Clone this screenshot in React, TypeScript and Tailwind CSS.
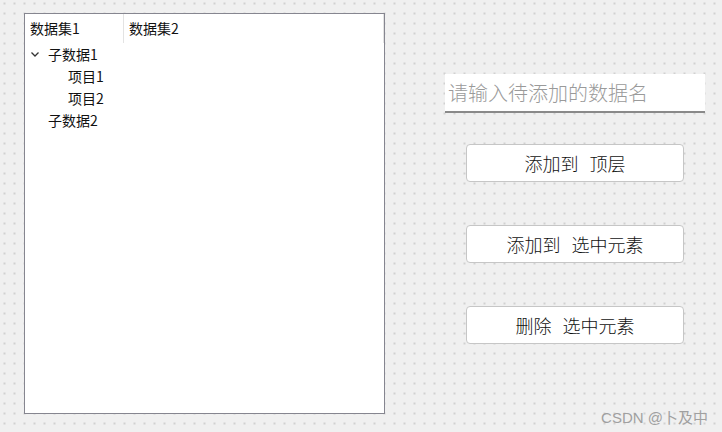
import React from "react";

const SANS = "font-['Noto_Sans_CJK_SC','Noto_Sans',sans-serif]";

interface TreeRow {
  label: string;
  depth: number;
  expanded?: boolean;
}

const ROWS: TreeRow[] = [
  { label: "子数据1", depth: 0, expanded: true },
  { label: "项目1", depth: 1 },
  { label: "项目2", depth: 1 },
  { label: "子数据2", depth: 0 },
];

function Chevron() {
  return (
    <svg width="10" height="10" viewBox="0 0 10 10" className="shrink-0">
      <path d="M1.5 3.5 L5 7 L8.5 3.5" fill="none" stroke="#333" strokeWidth="1.3" />
    </svg>
  );
}

function TreePanel() {
  return (
    <div className={`w-[361px] h-[401px] bg-white border border-[#868690] flex flex-col text-[14px] text-[#111] ${SANS}`}>
      {/* header */}
      <div className="h-[29px] flex items-stretch shrink-0">
        <div className="w-[99px] pl-[5px] flex items-center border-r border-[#e3e3e3]">数据集1</div>
        <div className="flex-1 pl-[5px] flex items-center border-r border-[#e3e3e3]">数据集2</div>
      </div>
      {/* rows */}
      <div className="flex flex-col">
        {ROWS.map((r) => (
          <div key={r.label} className="h-[22px] flex items-center pl-[5px]">
            <div className="w-[18px] flex items-center">{r.expanded ? <Chevron /> : null}</div>
            <div style={{ paddingLeft: r.depth * 20 }}>{r.label}</div>
          </div>
        ))}
      </div>
    </div>
  );
}

function Button({ verb, obj, mt }: { verb: string; obj: string; mt: string }) {
  return (
    <button
      type="button"
      className={`${mt} ml-[21px] w-[218px] h-[38px] bg-white border border-[#c6c6c6] rounded-[4px] text-[18px] font-light text-[#111] flex items-center justify-center gap-[11px]`}
    >
      <span>{verb}</span>
      <span>{obj}</span>
    </button>
  );
}

export default function App() {
  return (
    <div className="relative w-[722px] h-[432px] overflow-hidden bg-[#f0f0f0] bg-[radial-gradient(circle,#a8a8a8_0.65px,transparent_0.75px)] bg-[size:10px_10px] bg-[position:-0.5px_-1.5px] flex items-start pl-[24px] pt-[13px]">
      <TreePanel />

      <div className={`ml-[60px] flex flex-col ${SANS}`}>
        <div className="mt-[61px] w-[260px] h-[39px] bg-white border-b-2 border-[#8a8a8a] flex items-center pl-[3px] text-[20px] font-light text-[#9a9a9a]">
          请输入待添加的数据名
        </div>
        <Button verb="添加到" obj="顶层" mt="mt-[31px]" />
        <Button verb="添加到" obj="选中元素" mt="mt-[43px]" />
        <Button verb="删除" obj="选中元素" mt="mt-[43px]" />
      </div>

      {/* watermark */}
      <div className="absolute right-[14px] bottom-[3px] text-[15px] text-[#a0a0a0] font-['Liberation_Sans','Noto_Sans_CJK_SC',sans-serif]">
        CSDN @卜及中
      </div>
    </div>
  );
}
